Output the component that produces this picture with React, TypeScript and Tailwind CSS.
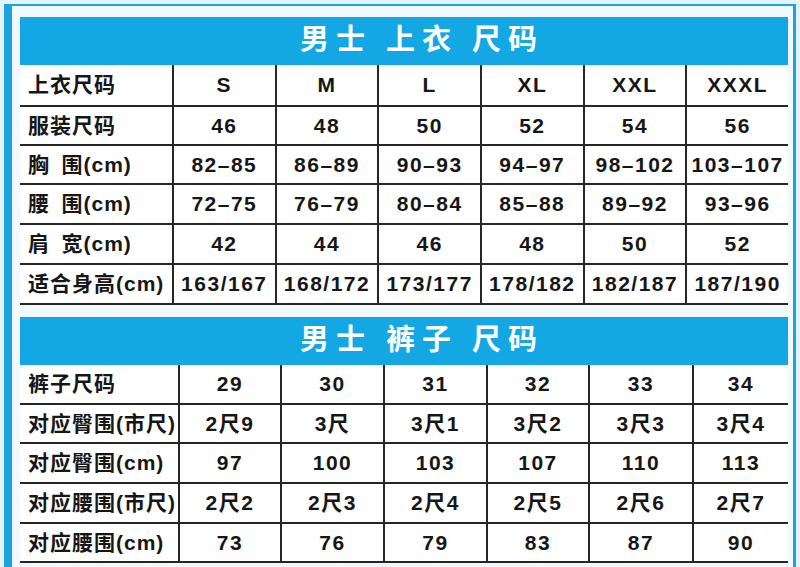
const topRows: string[][] = [
  ["上衣尺码", "S", "M", "L", "XL", "XXL", "XXXL"],
  ["服装尺码", "46", "48", "50", "52", "54", "56"],
  ["胸\u2002围(cm)", "82–85", "86–89", "90–93", "94–97", "98–102", "103–107"],
  ["腰\u2002围(cm)", "72–75", "76–79", "80–84", "85–88", "89–92", "93–96"],
  ["肩\u2002宽(cm)", "42", "44", "46", "48", "50", "52"],
  ["适合身高(cm)", "163/167", "168/172", "173/177", "178/182", "182/187", "187/190"],
];
const topHeights = ["h-[42px]", "h-[39px]", "h-[39px]", "h-[40px]", "h-[40px]", "h-[40px]"];

const pantsRows: string[][] = [
  ["裤子尺码", "29", "30", "31", "32", "33", "34"],
  ["对应臀围(市尺)", "2尺9", "3尺", "3尺1", "3尺2", "3尺3", "3尺4"],
  ["对应臀围(cm)", "97", "100", "103", "107", "110", "113"],
  ["对应腰围(市尺)", "2尺2", "2尺3", "2尺4", "2尺5", "2尺6", "2尺7"],
  ["对应腰围(cm)", "73", "76", "79", "83", "87", "90"],
];
const pantsHeights = ["h-[40px]", "h-[39px]", "h-[40px]", "h-[40px]", "h-[39px]"];

function Title({ parts }: { parts: string[] }) {
  return (
    <div className="flex h-[48px] items-center justify-center bg-[#13a7e4] pl-[36px] text-[29px] font-bold tracking-[7px] text-white">
      {parts.map((p, i) => (
        <span key={i} className={i > 0 ? "ml-[14px]" : ""}>
          {p}
        </span>
      ))}
    </div>
  );
}

function SizeTable({
  rows,
  heights,
  cols,
}: {
  rows: string[][];
  heights: string[];
  cols: string;
}) {
  return (
    <div className={`grid bg-white ${cols}`}>
      {rows.map((row, r) =>
        row.map((cell, c) => (
          <div
            key={`${r}-${c}`}
            className={`flex items-center border-b-2 border-[#262626] ${heights[r]} ${
              c === 0
                ? "pl-[8px] tracking-[1px]"
                : "justify-center border-l-2 tracking-[1.5px]"
            }`}
          >
            {cell}
          </div>
        ))
      )}
    </div>
  );
}

export default function App() {
  return (
    <div
      className="h-[567px] w-[800px] overflow-hidden bg-[#e4f3fa] px-[4px] pt-[4px] text-[21px] font-bold text-[#161616]"
      style={{ fontFamily: '"Liberation Sans", "Noto Sans CJK SC", sans-serif' }}
    >
      <div className="h-[600px] border-t-2 border-r-[3px] border-l-[8px] border-[#1ba3dc] bg-[#f1f9fd] pt-[11px] pr-[5px] pl-[8px]">
        <Title parts={["男士", "上衣", "尺码"]} />
        <SizeTable rows={topRows} heights={topHeights} cols="grid-cols-[152px_repeat(6,1fr)]" />
        <div className="mt-[12px]">
          <Title parts={["男士", "裤子", "尺码"]} />
          <SizeTable
            rows={pantsRows}
            heights={pantsHeights}
            cols="grid-cols-[158px_102px_103px_103px_102px_104px_1fr]"
          />
        </div>
      </div>
    </div>
  );
}
